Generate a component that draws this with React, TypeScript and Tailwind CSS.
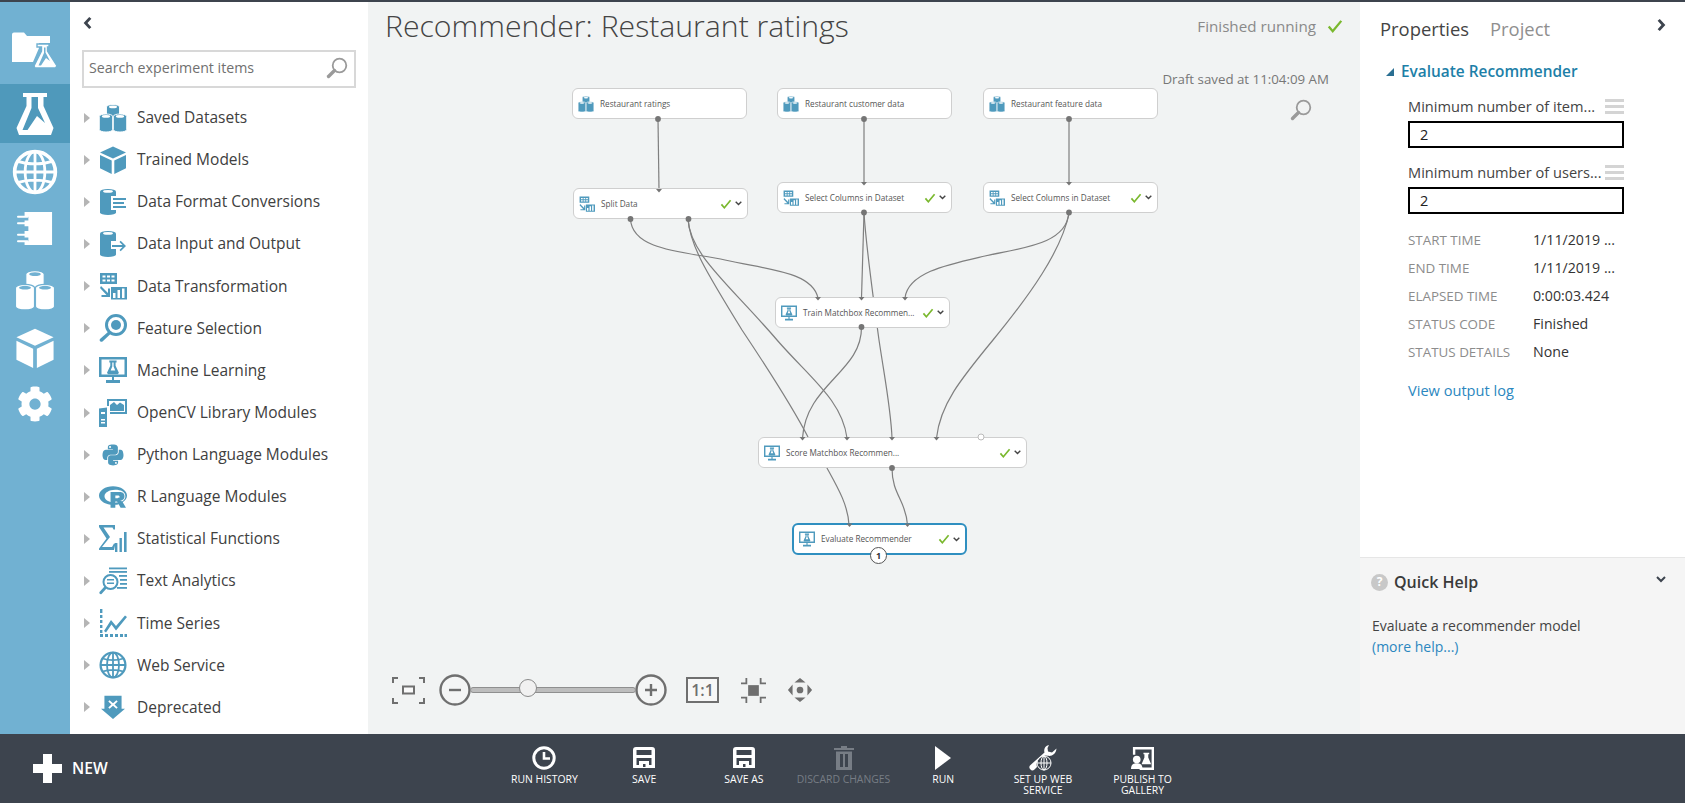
import React from "react";
import { FaCog, FaPython, FaRProject } from "react-icons/fa";

type IP = { hole?: string; className?: string };
const Svg = ({ className, children, vb = "0 0 28 28" }: { className?: string; children: React.ReactNode; vb?: string }) => (
  <svg viewBox={vb} className={className} fill="currentColor">{children}</svg>
);
const cyl = (cx: number, top: number, w: number, h: number, hole: string, k: string, gap = 0.9) => {
  const r = w / 2;
  return (
    <g key={k}>
      <path d={`M${cx - r} ${top + 2.4} v${h - 4.8} a${r} 2.4 0 0 0 ${w} 0 v${-(h - 4.8)} a${r} 2.4 0 0 0 ${-w} 0z`} fill="currentColor" stroke={hole} strokeWidth={gap} />
      <ellipse cx={cx} cy={top + 2.4} rx={r * 0.62} ry={1.3} fill={hole} />
    </g>
  );
};
const Datasets = ({ hole = "#fff", className }: IP) => (
  <Svg className={className}>
    {cyl(14, 0.5, 13, 12, hole, "a")}
    {cyl(7, 10, 13.4, 18, hole, "b")}
    {cyl(21, 10, 13.4, 18, hole, "c")}
  </Svg>
);
const Cube = ({ className }: IP) => (
  <Svg className={className}>
    <path d="M14 0.5 27 6.5 14 12.5 1 6.5z" />
    <path d="M1 9 12.7 14.6V28L1 22.2z" />
    <path d="M15.3 14.6 27 9V22.2L15.3 28z" />
  </Svg>
);
const FormatConv = ({ hole = "#fff", className }: IP) => (
  <Svg className={className}>
    {cyl(9, 1, 16, 26, hole, "a", 0)}
    <rect x="12" y="8" width="16" height="14" fill={hole} />
    <rect x="14" y="10" width="13" height="2" />
    <rect x="14" y="14" width="11" height="2" />
    <rect x="14" y="18" width="13" height="2" />
  </Svg>
);
const InputOutput = ({ hole = "#fff", className }: IP) => (
  <Svg className={className}>
    {cyl(9, 1, 16, 26, hole, "a", 0)}
    <path d="M12 11h6v-1l10 6-10 7v-4h-6z" fill={hole} />
    <path d="M13 15h10.5l-3-3 1.2-1.2 5.3 5.2-5.3 5.2-1.2-1.2 3-3H13z" />
  </Svg>
);
const Transform = ({ className }: IP) => (
  <Svg className={className}>
    <path fillRule="evenodd" d="M1 1H18V12H1zM3.5 3.5V5.5H6.5V3.5zM8 3.5V5.5H11V3.5zM12.5 3.5V5.5H15.5V3.5zM3.5 7.5V9.5H6.5V7.5zM8 7.5V9.5H11V7.5zM12.5 7.5V9.5H15.5V7.5z" />
    <path d="M2 14 9 21V16.5H11V25H2.5V23H7.5L1 16z" />
    <path fillRule="evenodd" d="M12 15H28V27.5H12zM14 21V26H16.5V21zM18.5 18V26H21V18zM23 16.5V26H25.5V16.5z" />
  </Svg>
);
const FeatureSel = ({ className }: IP) => (
  <Svg className={className}>
    <path fillRule="evenodd" d="M17 0a11 11 0 1 1 0 22 11 11 0 1 1 0-22zM17 3a8 8 0 1 0 0 16 8 8 0 1 0 0-16z" />
    <circle cx="17" cy="11" r="5" />
    <path d="M9.5 17.5 11.5 20 3.5 27.5A1.8 1.8 0 0 1 1 25z" />
  </Svg>
);
const Monitor = ({ hole = "#fff", className }: IP) => (
  <Svg className={className}>
    <path fillRule="evenodd" d="M0 1H28V21H15V24H21V27H7V24H13V21H0zM2.5 3.5V18.5H25.5V3.5z" />
    <g transform="translate(8 4.5) scale(.66)">
      <path d="M3.5 0H14.5V3H13V8L18 18.5 16.5 21H1.5L0 18.5 5 8V3H3.5z" />
      <path d="M8 3H10V9L12.5 15H5.5L8 9z" fill={hole} />
    </g>
  </Svg>
);
const OpenCV = ({ className }: IP) => (
  <Svg className={className}>
    <path fillRule="evenodd" d="M8 0H28V15H11V13H26V2H10V7H8z" />
    <path d="M11 12V6L15 3 18 6 21 3.5 25 6V12z" />
    <path fillRule="evenodd" d="M0 9.5 8 8.5V28H0zM2 13V15H6V13zM2 20V21.5H6V20zM2 23V24.5H6V23z" />
  </Svg>
);
const Sigma = ({ className }: IP) => (
  <Svg className={className}>
    <path d="M0 0H16V4.5H14.5L13.5 2.5H4.5L11 12 3 22H13L15 18.5H16.5L15 25H0V23.5L7.5 13.5 0 2z" />
    <rect x="16" y="18" width="2.4" height="9" />
    <rect x="20.5" y="13" width="2.4" height="14" />
    <rect x="25" y="7" width="2.6" height="20" />
  </Svg>
);
const TextAn = ({ className }: IP) => (
  <Svg className={className}>
    <rect x="10" y="0.5" width="18" height="1.8" />
    <rect x="10" y="4" width="18" height="1.8" />
    <path fillRule="evenodd" d="M11.5 7a8 8 0 1 1 0 16 8 8 0 1 1 0-16zM11.5 9a6 6 0 1 0 0 12 6 6 0 1 0 0-12z" />
    <rect x="8" y="12" width="7" height="1.5" />
    <rect x="8" y="15.5" width="7" height="1.5" />
    <path d="M5.5 19.5 7.5 21.5 2.5 27A1.5 1.5 0 0 1 .5 25z" />
    <rect x="20" y="8" width="8" height="1.8" />
    <rect x="21" y="12" width="7" height="1.8" />
    <rect x="21" y="16" width="7" height="1.8" />
    <rect x="18" y="20" width="10" height="1.8" />
  </Svg>
);
const TimeS = ({ className }: IP) => (
  <Svg className={className}>
    <path d="M1 0h2.4v4H1zM1 6h2.4v3H1zM1 11h2.4v3H1zM1 16h2.4v3H1zM1 21h2.4v3H1zM1 25h3v3H1zM6 25h3v3H6zM11 25h3v3H11zM16 25h3v3H16zM21 25h3v3H21zM25.5 25h2.5v3H25.5z" />
    <path d="M5 22 12 11 17 17 26 6.5 28 8 17 21.5 12.5 15.5 7 23.5z" />
  </Svg>
);
const Globe = ({ className, sw = 1.8 }: IP & { sw?: number }) => (
  <svg viewBox="0 0 28 28" className={className} fill="none" stroke="currentColor" strokeWidth={sw}>
    <circle cx="14" cy="14" r="12.4" strokeWidth={sw + 0.5} />
    <ellipse cx="14" cy="14" rx="6" ry="12.4" />
    <path d="M14 1.5v25M1.5 14h25M3.5 7.5c6 2 15 2 21 0M3.5 20.5c6-2 15-2 21 0" />
  </svg>
);
const Depr = ({ hole = "#fff", className }: IP) => (
  <Svg className={className}>
    <path d="M4 1H24V16H28L14 28 0 16H4z" />
    <path d="M10 6 14 9.5 18 6 19.5 7.5 15.8 11 19.5 14.5 18 16 14 12.5 10 16 8.5 14.5 12.2 11 8.5 7.5z" fill={hole} />
  </Svg>
);
const Magnifier = ({ className }: IP) => (
  <svg viewBox="0 0 22 22" className={className} fill="none" stroke="currentColor">
    <circle cx="13.5" cy="8.5" r="6.8" strokeWidth="1.8" />
    <path d="M8.5 13.5 2.5 19.5" strokeWidth="3.4" strokeLinecap="round" />
  </svg>
);

const rows: [string, React.ReactNode][] = [
  ["Saved Datasets", <Datasets className="w-7 h-7" />],
  ["Trained Models", <Cube className="w-7 h-7" />],
  ["Data Format Conversions", <FormatConv className="w-7 h-7" />],
  ["Data Input and Output", <InputOutput className="w-7 h-7" />],
  ["Data Transformation", <Transform className="w-7 h-7" />],
  ["Feature Selection", <FeatureSel className="w-7 h-7" />],
  ["Machine Learning", <Monitor className="w-7 h-7" />],
  ["OpenCV Library Modules", <OpenCV className="w-7 h-7" />],
  ["Python Language Modules", <FaPython className="w-6 h-6 mx-0.5" />],
  ["R Language Modules", <FaRProject className="w-7 h-7" />],
  ["Statistical Functions", <Sigma className="w-7 h-7" />],
  ["Text Analytics", <TextAn className="w-7 h-7" />],
  ["Time Series", <TimeS className="w-7 h-7" />],
  ["Web Service", <Globe className="w-7 h-7" />],
  ["Deprecated", <Depr className="w-6 h-6 mx-0.5" />],
];

const NavRail = () => (
  <div className="w-[70px] shrink-0 bg-[#71b1d2] text-white flex flex-col items-center">
    <div className="h-[82px] w-full flex items-center justify-center pt-[14px]">
      <svg viewBox="0 0 46 38" className="w-[46px] h-[38px]" fill="currentColor">
        <path d="M0 3.5A2 2 0 0 1 2 1.5H12L15 5H38V12H27V17L21 31H0z" />
        <path d="M25 13H37V16H35.5V20L45 35 43.5 37H23L22 35 29.5 20V16H25z" stroke="#71b1d2" strokeWidth="1.4" />
        <path d="M32 16.5H33.5V21.5L38 30 34 27 29 34.5H26.5L32 22z" fill="#71b1d2" />
      </svg>
    </div>
    <div className="h-[59px] w-full bg-[#4f99bb] flex items-center justify-center">
      <svg viewBox="0 0 38 42" className="w-[38px] h-[42px]" fill="currentColor">
        <path d="M7 0H31V4H27.5V13L37.5 35 35 42H3L.5 35 10.5 13V4H7z" />
        <path d="M15.5 4H22V15L29 30 21 23 11.5 37H6.5L15.5 15z" fill="#4f99bb" />
      </svg>
    </div>
    <div className="h-[56px] w-full flex items-center justify-center mt-[1px]"><Globe className="w-[46px] h-[46px]" sw={1.7} /></div>
    <div className="h-[58px] w-full flex items-center justify-center">
      <svg viewBox="0 0 38 36" className="w-[36px] h-[36px]" fill="currentColor">
        <path d="M8 0H37V35H8V31H12V27H8V20H12V15H8V9H12V5H8z" />
        <path d="M1 5H11M1 12H10M1 24H10M1 31H11" stroke="currentColor" strokeWidth="2" fill="none" strokeLinecap="round" />
      </svg>
    </div>
    <div className="h-[64px] w-full flex items-center justify-center"><Datasets hole="#71b1d2" className="w-[40px] h-[40px]" /></div>
    <div className="h-[52px] w-full flex items-center justify-center"><Cube className="w-[40px] h-[42px]" /></div>
    <div className="h-[60px] w-full flex items-center justify-center"><FaCog className="w-[36px] h-[36px]" /></div>
  </div>
);

const Palette = () => (
  <div className="w-[298px] shrink-0 bg-white flex flex-col pl-3 pr-3">
    <div className="h-[48px] flex items-center pl-[1px] pb-[6px] text-[#3d444e]">
      <svg viewBox="0 0 10 14" className="w-[9px] h-[12px]" fill="currentColor"><path d="M7 0 9.5 2 5 7 9.5 12 7 14 .5 7z" /></svg>
    </div>
    <div className="w-[274px] h-[38px] border-2 border-[#d8d8d8] flex items-center justify-between pl-[5px] pr-[6px] pb-[2px]">
      <span className="text-[14.2px] text-[#707070]">Search experiment items</span>
      <Magnifier className="w-[22px] h-[22px] text-[#9a9a9a]" />
    </div>
    <div className="mt-[8.6px] flex flex-col">
      {rows.map(([label, icon]) => (
        <div key={label} className="h-[42.14px] flex items-center">
          <svg viewBox="0 0 6 10" className="w-[6px] h-[10px] ml-[2px] text-[#b5b5b5]" fill="currentColor"><path d="M0 0 6 5 0 10z" /></svg>
          <div className="w-[28px] h-[28px] ml-[9px] text-[#4f9abd] flex items-center justify-center">{icon}</div>
          <span className="ml-[10px] text-[15.5px] text-[#404040] whitespace-nowrap">{label}</span>
        </div>
      ))}
    </div>
  </div>
);

const Check = ({ className }: IP) => (
  <svg viewBox="0 0 14 12" className={className} fill="none" stroke="#7ab82e" strokeWidth="2"><path d="M1.5 6.5 5 10.5 12.5 1.5" /></svg>
);
const Chev = ({ className }: IP) => (
  <svg viewBox="0 0 10 7" className={className} fill="none" stroke="currentColor" strokeWidth="2"><path d="M1 1 5 5 9 1" /></svg>
);

type NodeD = { label: string; cls: string; icon: "d" | "t" | "m"; done?: boolean; sel?: boolean };
const nodes: NodeD[] = [
  { label: "Restaurant ratings", cls: "left-[204px] top-[86px] w-[175px]", icon: "d" },
  { label: "Restaurant customer data", cls: "left-[409px] top-[86px] w-[175px]", icon: "d" },
  { label: "Restaurant feature data", cls: "left-[615px] top-[86px] w-[175px]", icon: "d" },
  { label: "Split Data", cls: "left-[205px] top-[186px] w-[175px]", icon: "t", done: true },
  { label: "Select Columns in Dataset", cls: "left-[409px] top-[180px] w-[175px]", icon: "t", done: true },
  { label: "Select Columns in Dataset", cls: "left-[615px] top-[180px] w-[175px]", icon: "t", done: true },
  { label: "Train Matchbox Recommen...", cls: "left-[407px] top-[295px] w-[175px]", icon: "m", done: true },
  { label: "Score Matchbox Recommen...", cls: "left-[390px] top-[435px] w-[269px]", icon: "m", done: true },
  { label: "Evaluate Recommender", cls: "left-[424px] top-[521px] w-[175px]", icon: "m", done: true, sel: true },
];

const edges = [
  "M658 119 L659 190",
  "M864 119 L864 183",
  "M1069 119 L1069 183",
  "M630.5 219 C632 252 690 252 725 260 C770 270 812 272 818 298",
  "M864 213 L861.5 298",
  "M1069 213 C1066 245 1020 248 985 256 C950 264 908 272 905 298",
  "M688 219 C690 255 730 285 777 340 C810 378 842 400 847 438",
  "M688 219 C690 245 705 270 742 330 C770 372 795 412 808 437 L827 468 C838 488 848 505 849 525",
  "M864 213 C866 245 870 275 879 340 C885 380 891 410 892 438",
  "M861.5 327 C862 372 806 384 802.5 438",
  "M1069 213 C1062 250 1030 295 993 340 C960 380 940 405 936.5 438",
  "M892 468 C892 495 906 500 907.5 525",
];
const outs: [number, number][] = [[658, 119], [864, 119], [1069, 119], [630.5, 219], [688.5, 219], [864, 212.5], [1069, 212.5], [861.5, 327], [892, 468]];
const ins: [number, number][] = [[659, 189], [864, 182], [1069, 182], [818, 297], [861.5, 297], [905, 297], [802.5, 437], [847, 437], [892, 437], [936.5, 437], [849.5, 523.5], [907.5, 523.5]];

const GraphNode = ({ n }: { n: NodeD }) => (
  <div className={`absolute bg-white rounded-[6px] flex items-center pl-[5px] pr-[5px] ${n.sel ? "border-2 border-[#2f8fc0] h-[32px]" : "border border-[#cfcfcf] h-[31px]"} ${n.cls}`}>
    <div className="w-[16px] h-[16px] text-[#4f9abd] shrink-0">
      {n.icon === "d" && <Datasets className="w-[16px] h-[16px]" />}
      {n.icon === "t" && <Transform className="w-[16px] h-[16px]" />}
      {n.icon === "m" && <Monitor className="w-[16px] h-[16px]" />}
    </div>
    <span className="ml-[6px] pt-[1px] text-[8.2px] text-[#555] whitespace-nowrap flex-1">{n.label}</span>
    {n.done && <Check className="w-[12px] h-[10px] mr-[3px]" />}
    {n.done && <Chev className="w-[7px] h-[5px] text-[#444]" />}
  </div>
);

const ZoomBar = () => (
  <div className="absolute left-[24px] top-[672px] flex items-center text-[#6f6f6f]">
    <svg viewBox="0 0 33 27" className="w-[33px] h-[27px]" fill="none" stroke="currentColor" strokeWidth="2">
      <path d="M1 6V1H6M27 1H32V6M1 21V26H6M27 26H32V21" />
      <rect x="11" y="9.5" width="11" height="7" strokeWidth="2" fill="#fafafa" />
    </svg>
    <svg viewBox="0 0 32 32" className="w-[32px] h-[32px] ml-[14px] shrink-0" fill="none" stroke="currentColor" strokeWidth="2.4">
      <circle cx="16" cy="16" r="14.5" fill="#f4f5f5" /><path d="M10 16H22" strokeWidth="2.4" />
    </svg>
    <div className="relative w-[166px] h-[6px] -ml-[1px] bg-[#bdbdbd] border border-[#8f8f8f] rounded-full">
      <div className="absolute left-[48px] -top-[9px] w-[18px] h-[18px] rounded-full bg-[#f1f1f1] border border-[#8a8a8a]" />
    </div>
    <svg viewBox="0 0 32 32" className="w-[32px] h-[32px] -ml-[1px] shrink-0" fill="none" stroke="currentColor" strokeWidth="2.4">
      <circle cx="16" cy="16" r="14.5" fill="#f4f5f5" /><path d="M10 16H22M16 10V22" />
    </svg>
    <div className="ml-[19px] w-[33px] h-[26px] border-2 border-[#6f6f6f] bg-[#f7f7f7] flex items-center justify-center text-[16px] font-semibold">1:1</div>
    <svg viewBox="0 0 28 28" className="w-[25px] h-[25px] ml-[22px]" fill="none" stroke="currentColor" strokeWidth="2">
      <rect x="9" y="9" width="10" height="10" fill="currentColor" />
      <path d="M0 6H6V0M22 0V6H28M0 22H6V28M28 22H22V28" />
    </svg>
    <svg viewBox="0 0 28 28" className="w-[26px] h-[26px] ml-[21px]" fill="currentColor">
      <circle cx="14" cy="14" r="3.6" /><path d="M14 1 20 6H8zM14 27 20 22H8zM1 14 6 8V20zM27 14 22 8V20z" />
    </svg>
  </div>
);

const Canvas = () => (
  <div className="relative flex-1 bg-[#f1f3f3] min-w-0 overflow-hidden">
    <div className="flex items-start justify-between pl-[17px] pr-[17px]">
      <div className="text-[30.2px] font-light text-[#444] leading-[48px] whitespace-nowrap">Recommender: Restaurant ratings</div>
      <div className="flex items-center pt-[13px] text-[15.2px] text-[#8a8a8a]">
        <span>Finished running</span>
        <Check className="w-[16px] h-[14px] ml-[11px]" />
      </div>
    </div>
    <div className="text-right pr-[31px] pt-[20px] text-[13.3px] text-[#777]">Draft saved at 11:04:09 AM</div>
    <div className="flex justify-end pr-[48px] pt-[9px]"><Magnifier className="w-[22px] h-[22px] text-[#9a9a9a]" /></div>
    <svg viewBox="368 2 992 732" className="absolute inset-0 w-[992px] h-[732px]" fill="none" stroke="#7f7f7f" strokeWidth="1.2">
      {edges.map((d) => <path key={d} d={d} />)}
    </svg>
    {nodes.map((n) => <GraphNode key={n.cls} n={n} />)}
    <svg viewBox="368 2 992 732" className="absolute inset-0 w-[992px] h-[732px]" fill="#757575">
      {outs.map(([x, y]) => <circle key={`${x}-${y}`} cx={x} cy={y} r="2.9" />)}
      {ins.map(([x, y]) => <path key={`${x}-${y}`} d={`M${x - 3} ${y} h6 l-3 3.5z`} />)}
      <circle cx="981" cy="437" r="3" fill="#fff" stroke="#bbb" />
    </svg>
    <div className="absolute left-[502px] top-[545px] w-[17px] h-[17px] rounded-full bg-white border border-[#555] flex items-center justify-center text-[9px] font-bold text-[#333]">1</div>
    <ZoomBar />
  </div>
);

const Field = ({ label }: { label: string }) => (
  <div className="mb-[11px]">
    <div className="flex items-center justify-between h-[27px]">
      <span className="text-[14.6px] text-[#444] whitespace-nowrap">{label}</span>
      <div className="w-[19px] h-[15px] flex flex-col justify-between">
        <div className="h-[3px] bg-[#d4d4d4]" /><div className="h-[3px] bg-[#d4d4d4]" /><div className="h-[3px] bg-[#d4d4d4]" />
      </div>
    </div>
    <div className="mt-[1px] h-[27px] border-[2px] border-black flex items-center pl-[10px] text-[14.5px] text-[#222]">2</div>
  </div>
);

const props: [string, string][] = [
  ["START TIME", "1/11/2019 ..."],
  ["END TIME", "1/11/2019 ..."],
  ["ELAPSED TIME", "0:00:03.424"],
  ["STATUS CODE", "Finished"],
  ["STATUS DETAILS", "None"],
];

const RightPanel = () => (
  <div className="w-[325px] shrink-0 bg-white flex flex-col">
    <div className="h-[555px] pl-[20px] pr-[19px] relative">
      <div className="flex items-center gap-[21px] pt-[2px] h-[52px] text-[18.4px]">
        <span className="text-[#444]">Properties</span>
        <span className="text-[#8f8f8f]">Project</span>
      </div>
      <svg viewBox="0 0 10 14" className="absolute right-[19px] top-[17px] w-[9px] h-[12px] text-[#3d444e]" fill="currentColor"><path d="M3 0 .5 2 5 7 .5 12 3 14 9.5 7z" /></svg>
      <div className="flex items-center h-[28px] ml-[6px] mt-[4px]">
        <svg viewBox="0 0 8 8" className="w-[8px] h-[8px] text-[#2a6f92]" fill="currentColor"><path d="M8 0V8H0z" /></svg>
        <span className="ml-[7px] text-[15.4px] font-semibold text-[#1d7fa8] whitespace-nowrap">Evaluate Recommender</span>
      </div>
      <div className="ml-[28px] w-[216px]">
        <div className="pt-[7px]">
          <Field label="Minimum number of item..." />
          <Field label="Minimum number of users..." />
        </div>
        <div className="pt-[1px]">
          {props.map(([k, v]) => (
            <div key={k} className="h-[28px] flex items-center">
              <span className="w-[125px] text-[13.4px] text-[#8c8c8c] whitespace-nowrap">{k}</span>
              <span className="text-[14.2px] text-[#333] whitespace-nowrap">{v}</span>
            </div>
          ))}
        </div>
        <div className="mt-[14px] text-[14.6px] text-[#2b87c0]">View output log</div>
      </div>
    </div>
    <div className="flex-1 bg-[#f5f5f5] border-t border-[#e6e6e6] pl-[11px] pr-[19px] relative">
      <div className="flex items-center h-[48px]">
        <div className="w-[17px] h-[17px] rounded-full bg-[#c8c8c8] text-white text-[12px] font-bold flex items-center justify-center">?</div>
        <span className="ml-[6px] text-[16px] font-semibold text-[#3a3a3a]">Quick Help</span>
      </div>
      <Chev className="absolute right-[19px] top-[18px] w-[10px] h-[7px] text-[#3d444e]" />
      <div className="mt-[9px] ml-[1px] text-[14px] leading-[21px] text-[#444]">Evaluate a recommender model</div>
      <div className="ml-[1px] text-[14px] leading-[21px] text-[#2b87c0]">(more help...)</div>
    </div>
  </div>
);

const Floppy = ({ className }: IP) => (
  <svg viewBox="0 0 22 22" className={className} fill="currentColor">
    <path fillRule="evenodd" d="M3 0H19A3 3 0 0 1 22 3V21H0V3A3 3 0 0 1 3 0zM3.5 3V8H18.5V3zM3.5 11V18H6V14H16V18H18.5V11zM10 17V20H12.5V17z" />
  </svg>
);

const actions: { label: React.ReactNode; icon: React.ReactNode; dim?: boolean }[] = [
  { label: "RUN HISTORY", icon: <svg viewBox="0 0 24 24" className="w-[24px] h-[24px]" fill="none" stroke="currentColor" strokeWidth="3"><circle cx="12" cy="12" r="10.2" /><path d="M12 6V12.5H18" strokeWidth="2.6" /></svg> },
  { label: "SAVE", icon: <Floppy className="w-[22px] h-[22px]" /> },
  { label: "SAVE AS", icon: <Floppy className="w-[22px] h-[22px]" /> },
  { label: "DISCARD CHANGES", dim: true, icon: <svg viewBox="0 0 20 24" className="w-[20px] h-[24px]" fill="currentColor"><path fillRule="evenodd" d="M7 0H13V2H20V4H0V2H7zM2 5.5H18V24H2zM6 8V21H9V8zM11 8V21H14V8z" /></svg> },
  { label: "RUN", icon: <svg viewBox="0 0 18 24" className="w-[18px] h-[24px]" fill="currentColor"><path d="M1 0 17 12 1 24z" /></svg> },
  { label: <>SET UP WEB<br />SERVICE</>, icon: (
    <svg viewBox="0 0 28 26" className="w-[28px] h-[26px]" fill="currentColor">
      <path d="M20 0C16 1 14.5 4 15.5 7.5L1.5 20A3 3 0 0 0 5.5 24.5L8 22A9 9 0 0 1 19 10.8C23 11.5 27 9 27.5 3.5L23 7.5 19 6.5 18.5 3z" />
      <g fill="none" stroke="currentColor" strokeWidth="1"><circle cx="15" cy="18" r="7" /><ellipse cx="15" cy="18" rx="3" ry="7" /><path d="M8 18H22M15 11V25" /></g>
    </svg>) },
  { label: <>PUBLISH TO<br />GALLERY</>, icon: (
    <svg viewBox="0 0 24 24" className="w-[23px] h-[23px]" fill="currentColor">
      <path fillRule="evenodd" d="M2 0H24V24H9V21.5H21.5V2.5H4.5V8H2z" />
      <path d="M13 6H19V7.5H18V11L21 18H11L14 11V7.5H13z" />
      <circle cx="6" cy="13" r="4" /><path d="M0 23C0 18 3 17 6 17S12 18 12 23z" />
    </svg>) },
];

const BottomBar = () => (
  <div className="relative h-[69px] shrink-0 bg-[#3d444e] flex justify-center">
    <div className="absolute left-[33px] top-[20px] flex items-center">
      <svg viewBox="0 0 29 29" className="w-[29px] h-[29px] text-white" fill="currentColor"><path d="M10 0H19V10H29V19H19V29H10V19H0V10H10z" /></svg>
      <span className="ml-[10px] text-[15.6px] font-semibold text-white">NEW</span>
    </div>
    <div className="flex ml-[2px]">
      {actions.map((a, i) => (
        <div key={i} className={`w-[99.7px] flex flex-col items-center text-center ${a.dim ? "text-[#777d85]" : "text-white"}`}>
          <div className="h-[26px] mt-[11px] flex items-center justify-center">{a.icon}</div>
          <div className="mt-[3px] text-[10.4px] leading-[11px] whitespace-nowrap">{a.label}</div>
        </div>
      ))}
    </div>
  </div>
);

export default function App() {
  return (
    <div className="w-[1685px] h-[803px] flex flex-col overflow-hidden bg-white font-['Open_Sans',sans-serif]">
      <div className="h-[2px] shrink-0 bg-[#3d444e]" />
      <div className="flex-1 min-h-0 flex">
        <NavRail />
        <Palette />
        <Canvas />
        <RightPanel />
      </div>
      <BottomBar />
    </div>
  );
}
